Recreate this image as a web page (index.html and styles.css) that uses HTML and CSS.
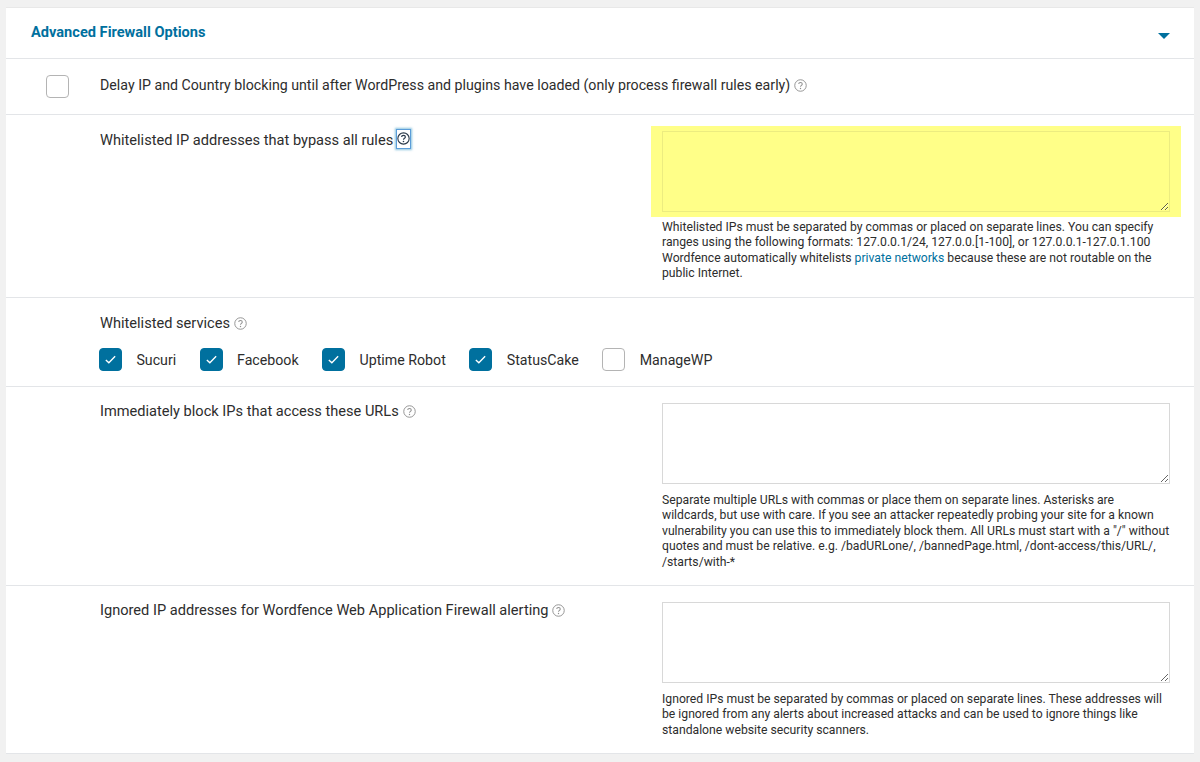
FILE: index.html
```html
<!DOCTYPE html>
<html lang="en">
<head>
<meta charset="utf-8">
<title>Advanced Firewall Options</title>
<link rel="stylesheet" href="styles.css">
</head>
<body>
<svg class="defs" width="0" height="0" aria-hidden="true">
  <symbol id="help" viewBox="0 0 14 14">
    <circle cx="7" cy="7" r="6.2" fill="none" stroke="currentColor" stroke-width="1"/>
    <path d="M5.1 5.5c0-1.1.9-1.8 1.9-1.8s1.9.7 1.9 1.7c0 1.5-1.9 1.4-1.9 3" fill="none" stroke="currentColor" stroke-width="1.1"/>
    <circle cx="7" cy="10.2" r=".75" fill="currentColor"/>
  </symbol>
  <symbol id="help-bold" viewBox="0 0 14 14">
    <circle cx="7" cy="7" r="6.1" fill="none" stroke="currentColor" stroke-width="1.2"/>
    <path d="M5 5.5c0-1.1.9-1.9 2-1.9s2 .8 2 1.8c0 1.5-2 1.4-2 3" fill="none" stroke="currentColor" stroke-width="1.3"/>
    <circle cx="7" cy="10.3" r=".85" fill="currentColor"/>
  </symbol>
  <symbol id="tick" viewBox="0 0 23 23">
    <path d="M6.4 12l3.3 3.1 6.9-7.1" fill="none" stroke="#fff" stroke-width="1.5"/>
  </symbol>
</svg>
<main class="panel">
  <header class="panel-head">
    <h2 class="panel-title">Advanced Firewall Options</h2>
    <span class="caret"></span>
  </header>

  <section class="row row-option">
    <span class="box"></span>
    <span class="label">Delay IP and Country blocking until after WordPress and plugins have loaded (only process firewall rules early)<svg class="help"><use href="#help"/></svg></span>
  </section>

  <section class="row row-field row-whitelist">
    <div class="label">Whitelisted IP addresses that bypass all rules<span class="help-focus"><svg class="help help-dark"><use href="#help-bold"/></svg></span></div>
    <div class="field">
      <div class="highlight"><textarea class="area area-yellow"></textarea></div>
      <p class="note note-first">Whitelisted IPs must be separated by commas or placed on separate lines. You can specify ranges using the following formats: 127.0.0.1/24, 127.0.0.[1-100], or 127.0.0.1-127.0.1.100<br>Wordfence automatically whitelists <a href="#">private networks</a> because these are not routable on the public Internet.</p>
    </div>
  </section>

  <section class="row row-services">
    <div class="label">Whitelisted services<svg class="help"><use href="#help"/></svg></div>
    <div class="services">
      <span class="service"><span class="box box-on"><svg class="tick"><use href="#tick"/></svg></span>Sucuri</span>
      <span class="service"><span class="box box-on"><svg class="tick"><use href="#tick"/></svg></span>Facebook</span>
      <span class="service"><span class="box box-on"><svg class="tick"><use href="#tick"/></svg></span>Uptime Robot</span>
      <span class="service"><span class="box box-on"><svg class="tick"><use href="#tick"/></svg></span>StatusCake</span>
      <span class="service"><span class="box"></span>ManageWP</span>
    </div>
  </section>

  <section class="row row-field row-urls">
    <div class="label">Immediately block IPs that access these URLs<svg class="help"><use href="#help"/></svg></div>
    <div class="field">
      <textarea class="area"></textarea>
      <p class="note note-spaced">Separate multiple URLs with commas or place them on separate lines. Asterisks are wildcards, but use with care. If you see an attacker repeatedly probing your site for a known vulnerability you can use this to immediately block them. All URLs must start with a "/" without quotes and must be relative. e.g. /badURLone/, /bannedPage.html, /dont-access/this/URL/, /starts/with-*</p>
    </div>
  </section>

  <section class="row row-field row-ignored">
    <div class="label">Ignored IP addresses for Wordfence Web Application Firewall alerting<svg class="help"><use href="#help"/></svg></div>
    <div class="field">
      <textarea class="area"></textarea>
      <p class="note note-spaced">Ignored IPs must be separated by commas or placed on separate lines. These addresses will be ignored from any alerts about increased attacks and can be used to ignore things like standalone website security scanners.</p>
    </div>
  </section>
</main>
</body>
</html>
```

FILE: styles.css
```css
* { box-sizing: border-box; }
html, body { height: 100%; }
body {
  margin: 0;
  height: 762px;
  overflow: hidden;
  padding: 7px 6px 0;
  background: #f1f1f1;
  font-family: Roboto, "Liberation Sans", sans-serif;
  font-size: 14.6px;
  line-height: 20px;
  color: #2d2d2d;
}
.defs { position: absolute; }
.panel { background: #fff; border-top: 1px solid #e8e8e8; }
.panel-head {
  height: 51px;
  padding: 0 24px 0 25px;
  display: flex;
  align-items: center;
  justify-content: space-between;
  border-bottom: 1px solid #e3e5e8;
}
.panel-title { margin: 0 0 3px; font-size: 14.6px; font-weight: 700; color: #00709e; }
.caret {
  margin-top: 5px;
  width: 0;
  height: 0;
  border-left: 6px solid transparent;
  border-right: 6px solid transparent;
  border-top: 6px solid #00709e;
}
.row { border-bottom: 1px solid #e3e5e8; }
.row-option {
  height: 56px;
  padding: 16px 0 0 40px;
  display: flex;
  gap: 31px;
}
.row-option .label { font-size: 14.2px; }
.box {
  flex: none;
  width: 23px;
  height: 23px;
  display: block;
  background: #fff;
  border: 1px solid #b4b4b4;
  border-radius: 4px;
}
.box-on { background: #00709e; border-color: #00709e; }
.tick { display: block; width: 21px; height: 21px; }
.help { width: 13px; height: 13px; margin-left: 4px; vertical-align: -2px; color: #8f8f8f; }
.help-dark { margin: 0; color: #2b3a4a; display: block; }
.help-focus {
  display: inline-block;
  vertical-align: -4px;
  margin-left: 3px;
  padding: 2px 0 3px;
  width: 15px;
  border: 1px solid #5b9dd9;
  box-shadow: 0 0 2px 1px rgba(30, 140, 190, 0.5);
}
.row-field {
  padding: 16px 24px 16px 94px;
  display: grid;
  grid-template-columns: 562px 508px;
}
.row-field .label { margin-top: -2px; }
.row-whitelist { height: 183px; }
.row-urls { height: 199px; }
.row-ignored { height: 168px; }
.field { min-width: 0; }
.highlight { margin: -5px -11px 0; padding: 5px 11px 5px; background: #ffff88; }
.area {
  display: block;
  width: 100%;
  height: 81px;
  margin: 0;
  padding: 4px;
  resize: vertical;
  background: #fff;
  border: 1px solid #d8d8d8;
  border-radius: 0;
}
.area-yellow { background: #ffff88; border-color: #ecec80; }
.note { margin: 0; font-size: 12.2px; line-height: 15.4px; color: #2d2d2d; }
.note-first { margin-top: 3px; }
.note-spaced { margin-top: 9px; }
.note a { color: #00709e; text-decoration: none; }
.row-services { height: 89px; padding: 15px 0 0 93px; }
.row-services .label { margin-left: 1px; }
.services { margin-top: 15px; display: flex; gap: 23.5px; font-size: 14.2px; }
.service { display: flex; align-items: center; gap: 14.4px; }
```
